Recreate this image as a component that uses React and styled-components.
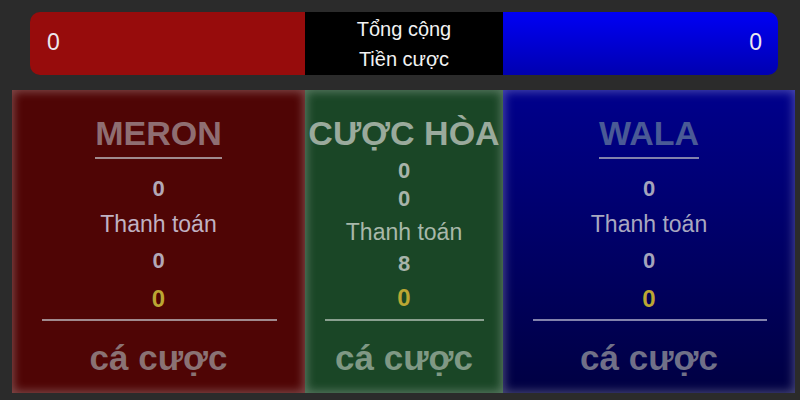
import React from 'react';
import styled, { createGlobalStyle } from 'styled-components';

const GlobalStyle = createGlobalStyle`
  body {
    margin: 0;
    background-color: #2b2b2b;
    font-family: 'Liberation Sans', Arial, sans-serif;
  }
`;

const tones = {
  meron: {
    background: '#4f0505',
    title: '#8f6e72',
    amount: '#b3a8b6',
    label: '#c0b2c2',
    bet: '#8a7274',
    line: '#a08a8e',
  },
  draw: {
    background: '#1a4626',
    title: '#9aaa9c',
    amount: '#a8b4aa',
    label: '#a8b8aa',
    bet: '#7f9884',
    line: '#8aa090',
  },
  wala: {
    background: 'linear-gradient(to bottom, #00008c, #000042)',
    title: '#4a5a96',
    amount: '#a4a4bc',
    label: '#a8a8c0',
    bet: '#707088',
    line: '#8282ac',
  },
};

const Screen = styled.div`
  width: 800px;
  height: 400px;
  padding: 12px 5px 0 12px;
  box-sizing: border-box;
  overflow: hidden;
`;

const TotalBar = styled.div`
  display: grid;
  grid-template-columns: 275px 198px 1fr;
  height: 63px;
  margin: 0 17px 0 18px;
  border-radius: 10px;
  overflow: hidden;
`;

const Side = styled.div`
  display: flex;
  align-items: center;
  justify-content: ${(props) => (props.right ? 'flex-end' : 'flex-start')};
  padding: 0 16px 2px 17px;
  background: ${(props) => props.background};
  color: #ece8ee;
  font-size: 23px;
`;

const Middle = styled.div`
  display: flex;
  flex-direction: column;
  align-items: center;
  justify-content: center;
  gap: 6px;
  background-color: #000;
  color: #f2f2f2;
  font-size: 20px;
  line-height: 24px;
`;

const Panels = styled.div`
  display: grid;
  grid-template-columns: 293px 198px 1fr;
  height: 303px;
  margin-top: 15px;
`;

const Panel = styled.section`
  display: flex;
  flex-direction: column;
  align-items: center;
  padding-top: 25px;
  background: ${(props) => tones[props.tone].background};
  box-shadow: inset 0 0 10px 2px rgba(255, 255, 255, 0.28);
  box-sizing: border-box;
`;

const Title = styled.h2`
  margin: 0;
  padding-bottom: ${(props) => (props.underline ? 6 : 0)}px;
  border-bottom: ${(props) =>
    props.underline ? `2px solid ${tones[props.tone].line}` : 'none'};
  color: ${(props) => tones[props.tone].title};
  font-size: 34px;
  line-height: 36px;
  font-weight: bold;
  white-space: nowrap;
`;

const Amount = styled.div`
  margin-top: ${(props) => props.gap}px;
  color: ${(props) => tones[props.tone].amount};
  font-size: 22px;
  line-height: 24px;
  font-weight: bold;
`;

const Label = styled.div`
  margin-top: ${(props) => props.gap}px;
  color: ${(props) => tones[props.tone].label};
  font-size: 23px;
  line-height: 26px;
`;

const Payout = styled.div`
  margin-top: ${(props) => props.gap}px;
  color: #bba633;
  font-size: 24px;
  line-height: 28px;
  font-weight: bold;
`;

const Divider = styled.hr`
  align-self: stretch;
  margin: ${(props) => (props.narrow ? '7px 19px 0 20px' : '6px 28px 0 30px')};
  border: none;
  border-top: 2px solid ${(props) => tones[props.tone].line};
`;

const BetLabel = styled.div`
  margin-top: 18px;
  color: ${(props) => tones[props.tone].bet};
  font-size: 35px;
  line-height: 38px;
  font-weight: bold;
`;

const SidePanel = ({ tone, name }) => (
  <Panel tone={tone}>
    <Title tone={tone} underline>
      {name}
    </Title>
    <Amount tone={tone} gap={18}>0</Amount>
    <Label tone={tone} gap={10}>Thanh toán</Label>
    <Amount tone={tone} gap={12}>0</Amount>
    <Payout gap={12}>0</Payout>
    <Divider tone={tone} />
    <BetLabel tone={tone}>cá cược</BetLabel>
  </Panel>
);

const App = () => {
  return (
    <>
      <GlobalStyle />
      <Screen>
        <TotalBar>
          <Side background="#970c0c">0</Side>
          <Middle>
            <span>Tổng cộng</span>
            <span>Tiền cược</span>
          </Middle>
          <Side right background="linear-gradient(to bottom, #0000f5, #0000b0)">
            0
          </Side>
        </TotalBar>
        <Panels>
          <SidePanel tone="meron" name="MERON" />
          <Panel tone="draw">
            <Title tone="draw">CƯỢC HÒA</Title>
            <Amount tone="draw" gap={8}>0</Amount>
            <Amount tone="draw" gap={4}>0</Amount>
            <Label tone="draw" gap={8}>Thanh toán</Label>
            <Amount tone="draw" gap={7}>8</Amount>
            <Payout gap={8}>0</Payout>
            <Divider tone="draw" narrow />
            <BetLabel tone="draw">cá cược</BetLabel>
          </Panel>
          <SidePanel tone="wala" name="WALA" />
        </Panels>
      </Screen>
    </>
  );
};

export default App;
